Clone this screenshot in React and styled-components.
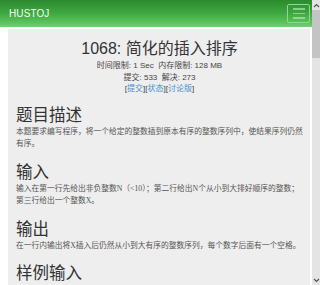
import React from "react";
import styled, { createGlobalStyle } from "styled-components";

const GlobalStyle = createGlobalStyle`
  html, body { margin: 0; padding: 0; background: #ffffff; overflow: hidden; }
  body { font-family: "Liberation Sans", "Noto Sans CJK SC", sans-serif; color: #333; }
`;

const Screen = styled.div`
  display: flex;
  width: 320px;
  height: 285px;
  overflow: hidden;
`;

const Page = styled.div`
  flex: 1;
  display: flex;
  flex-direction: column;
  min-width: 0;
`;

const NavBar = styled.div`
  height: 27px;
  flex: none;
  display: flex;
  align-items: center;
  justify-content: space-between;
  padding: 0 2px 0 9px;
  background: linear-gradient(to bottom, #2b8a2e 0%, #3da53f 45%, #5cc45c 85%, #72d072 100%);
`;

const Brand = styled.span`
  font-family: "Liberation Sans", sans-serif;
  font-size: 10px;
  color: #f2fff2;
  letter-spacing: 0.1px;
`;

const Toggle = styled.div`
  width: 21px;
  height: 17px;
  border: 1px solid #8fd88f;
  border-radius: 2px;
  display: flex;
  flex-direction: column;
  justify-content: center;
  align-items: center;
  gap: 3px;
`;

const Bar = styled.span`
  display: block;
  width: 12px;
  height: 1.5px;
  background: rgba(190, 240, 190, 0.6);
`;

const Panel = styled.div`
  flex: 1;
  margin: 2px 2px 0 8px;
  padding: 9px 7px 0 8px;
  background: #eeeeee;
`;

const Title = styled.h1`
  margin: 0;
  text-align: center;
  font-weight: normal;
  font-size: 16px;
  line-height: 22px;
  color: #333;
  font-family: "Liberation Sans", "Noto Sans CJK SC", sans-serif;
`;

const Info = styled.div`
  text-align: center;
  font-size: 8px;
  line-height: 11.5px;
  color: #444;
  font-family: "Liberation Sans", "Noto Sans CJK SC", sans-serif;
`;

const Link = styled.a`
  color: #4a90d0;
  text-decoration: none;
`;

const Heading = styled.h2`
  margin: ${(p) => (p.$first ? "9px" : "10px")} 0 2px 0;
  font-weight: normal;
  font-size: 16.5px;
  line-height: 20px;
  color: #333;
  font-family: "Noto Sans CJK SC", sans-serif;
`;

const Para = styled.p`
  margin: 0;
  font-size: 7.75px;
  line-height: 12.5px;
  color: #555;
  font-family: "Liberation Serif", "Noto Sans CJK SC", serif;
`;

const Scrollbar = styled.div`
  width: 8px;
  flex: none;
  display: flex;
  flex-direction: column;
  background: #e4e4e4;
`;

const Arrow = styled.div`
  height: 10px;
  flex: none;
  display: flex;
  align-items: center;
  justify-content: center;
`;

const Thumb = styled.div`
  height: 48px;
  flex: none;
  background: #c4c4c4;
`;

const Track = styled.div`
  flex: 1;
`;

const Chevron = ({ down }) => (
  <svg width="7" height="5" viewBox="0 0 7 5">
    <path
      d={down ? "M1 1 L3.5 3.5 L6 1" : "M1 4 L3.5 1.5 L6 4"}
      fill="none"
      stroke="#555"
      strokeWidth="1.2"
    />
  </svg>
);

export default function App() {
  return (
    <>
      <GlobalStyle />
      <Screen>
        <Page>
          <NavBar>
            <Brand>HUSTOJ</Brand>
            <Toggle>
              <Bar />
              <Bar />
              <Bar />
            </Toggle>
          </NavBar>
          <Panel>
            <Title>1068: 简化的插入排序</Title>
            <Info>时间限制: 1 Sec&nbsp;&nbsp;内存限制: 128 MB</Info>
            <Info>提交: 533&nbsp;&nbsp;解决: 273</Info>
            <Info>
              [<Link href="#">提交</Link>][<Link href="#">状态</Link>][<Link href="#">讨论版</Link>]
            </Info>
            <Heading $first>题目描述</Heading>
            <Para>本题要求编写程序，将一个给定的整数插到原本有序的整数序列中，使结果序列仍然有序。</Para>
            <Heading>输入</Heading>
            <Para>输入在第一行先给出非负整数N（&lt;10）；第二行给出N个从小到大排好顺序的整数；第三行给出一个整数X。</Para>
            <Heading>输出</Heading>
            <Para>在一行内输出将X插入后仍然从小到大有序的整数序列，每个数字后面有一个空格。</Para>
            <Heading>样例输入</Heading>
          </Panel>
        </Page>
        <Scrollbar>
          <Arrow>
            <Chevron />
          </Arrow>
          <Thumb />
          <Track />
          <Arrow>
            <Chevron down />
          </Arrow>
        </Scrollbar>
      </Screen>
    </>
  );
}
